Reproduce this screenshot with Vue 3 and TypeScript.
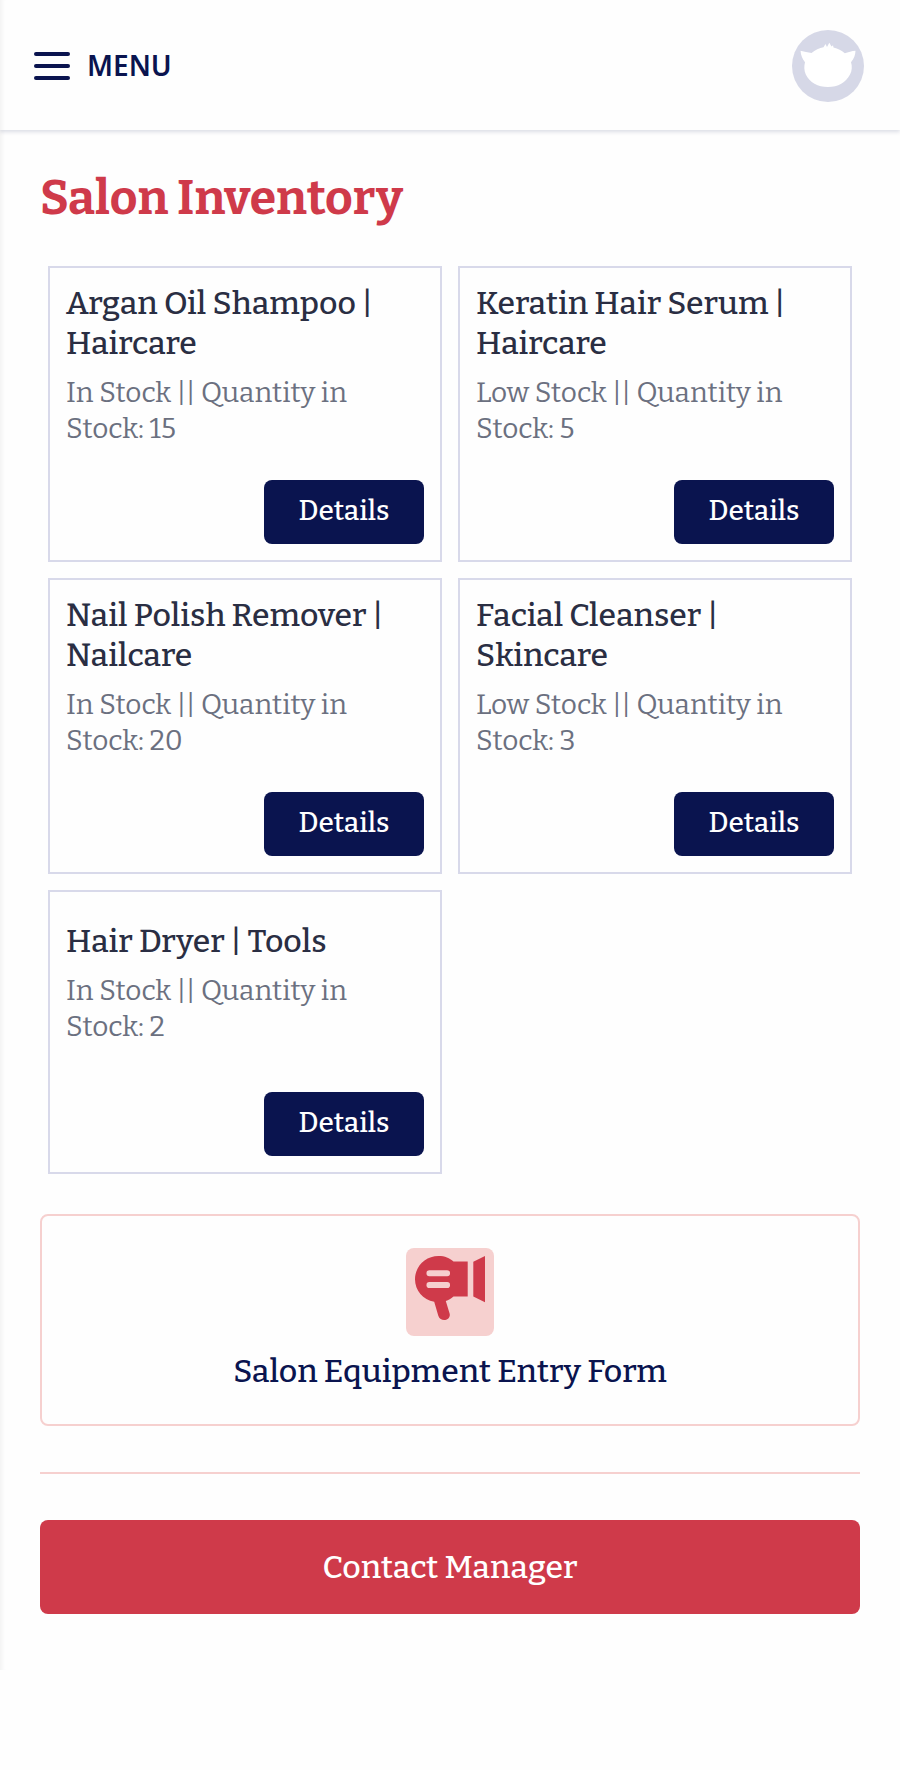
<script setup lang="ts">
interface Item {
  name: string
  category: string
  status: string
  quantity: number
}

const items: Item[] = [
  { name: 'Argan Oil Shampoo', category: 'Haircare', status: 'In Stock', quantity: 15 },
  { name: 'Keratin Hair Serum', category: 'Haircare', status: 'Low Stock', quantity: 5 },
  { name: 'Nail Polish Remover', category: 'Nailcare', status: 'In Stock', quantity: 20 },
  { name: 'Facial Cleanser', category: 'Skincare', status: 'Low Stock', quantity: 3 },
  { name: 'Hair Dryer', category: 'Tools', status: 'In Stock', quantity: 2 },
]
</script>

<template>
  <div class="page">
    <header class="topbar">
      <button class="menu" type="button">
        <span class="bars"><i></i><i></i><i></i></span>
        <span class="menu-label">MENU</span>
      </button>
      <svg class="avatar" viewBox="0 0 72 72" aria-label="Profile">
        <circle cx="36" cy="36" r="36" fill="#d6d8e7" />
        <path
          fill="#fff"
          d="M8.500 20.700C12 21.500 16 22.400 19.500 23C23 20 27.500 18 31.500 17.300L33.500 14L35 17L37.300 12.800L39.500 16.600L41 15.200L41.500 17.500C46 18.500 49.500 20.500 52.800 23.200C56 22.300 60 21 63.500 20.800C63.400 25 62 29 59 32.200C60.300 36 60 41 58 44.500C54 52.500 46 57 36 57C26 57 17.500 52.500 13.800 44.500C12 40.500 12 36 13 32.200C10.500 29 8.800 25 8.500 20.700Z"
        />
      </svg>
    </header>

    <main class="content">
      <h1>Salon Inventory</h1>

      <section class="grid">
        <article v-for="item in items" :key="item.name" class="card">
          <div class="info">
            <h2>{{ item.name }} | {{ item.category }}</h2>
            <p>{{ item.status }} || Quantity in Stock: {{ item.quantity }}</p>
          </div>
          <button class="details" type="button">Details</button>
        </article>
      </section>

      <a class="form-link">
        <svg class="form-icon" viewBox="0 0 88 88" aria-hidden="true">
          <rect width="88" height="88" rx="8" fill="#f6d0cf" />
          <g fill="#cf3a4a">
            <path d="M32.500 8C39 8 43.500 10 47.500 13.500H61.700V48.500H47.500C45 50.500 42.500 52 39.800 53L43.600 65.500C45.500 72.500 34.500 74.800 32.300 67.800L28.200 53.800C17 52 9 42.500 9 31.300C9 18.300 19.500 8 32.500 8Z" />
            <path d="M67.300 13.700L79 8V54.300L67.300 48.500Z" />
          </g>
          <g fill="#f6d0cf">
            <rect x="20.500" y="22.300" width="23.500" height="6" rx="2.800" />
            <rect x="20.500" y="34" width="23.500" height="6" rx="2.800" />
          </g>
        </svg>
        <span>Salon Equipment Entry Form</span>
      </a>

      <hr />

      <button class="contact" type="button">Contact Manager</button>
    </main>
  </div>
</template>

<style>
body {
  background: #fefefe;
}
</style>

<style scoped>
.page {
  height: 1670px;
  box-shadow: inset 5px 0 4px -3px rgba(0, 0, 0, 0.05);
  font-family: Bitter, "DejaVu Serif Condensed", "DejaVu Serif", serif;
  font-weight: 500;
}

button {
  margin: 0;
  padding: 0;
  border: 0;
  font-family: inherit;
  font-weight: 500;
}

.topbar {
  box-sizing: border-box;
  height: 130px;
  padding: 2px 36px 0 34px;
  display: flex;
  align-items: center;
  justify-content: space-between;
  box-shadow: 0 2px 4px rgba(10, 20, 80, 0.14);
}

.menu {
  display: flex;
  align-items: center;
  gap: 17px;
  background: none;
  color: #0a144f;
}

.bars {
  width: 36px;
  display: flex;
  flex-direction: column;
  gap: 8px;
}

.bars i {
  height: 4px;
  border-radius: 2px;
  background: #0a144f;
}

.menu-label {
  padding-bottom: 2px;
  font: 600 28px/36px "Noto Sans", "Open Sans", sans-serif;
}

.avatar {
  width: 72px;
  height: 72px;
}

.content {
  padding: 0 40px;
}

h1 {
  margin: 0;
  padding-top: 36px;
  color: #cf3a4a;
  font-size: 48px;
  font-weight: 700;
  line-height: 64px;
}

.grid {
  margin: 36px 8px 0;
  display: grid;
  grid-template-columns: 1fr 1fr;
  gap: 16px;
}

.card {
  box-sizing: border-box;
  min-height: 284px;
  padding: 16px;
  border: 2px solid #d8d9ea;
  display: flex;
  flex-direction: column;
}

.info {
  flex: 1;
  display: flex;
  flex-direction: column;
  justify-content: center;
  margin-top: -1px;
  padding-bottom: 33px;
}

h2 {
  margin: 0 0 12px;
  color: #2a2e43;
  font-size: 32px;
  font-weight: 500;
  line-height: 40px;
}

.info p {
  margin: 0;
  color: #6b7080;
  font-size: 28px;
  font-weight: 400;
  line-height: 36px;
}

.details {
  align-self: flex-end;
  width: 160px;
  height: 64px;
  padding-bottom: 3px;
  border-radius: 8px;
  background: #0a144f;
  color: #fff;
  font-size: 28px;
}

.form-link {
  box-sizing: border-box;
  height: 212px;
  margin-top: 40px;
  padding-top: 32px;
  border: 2px solid #f6d0cf;
  border-radius: 8px;
  display: flex;
  flex-direction: column;
  align-items: center;
  gap: 15px;
  color: #0a144f;
  font-size: 32px;
  line-height: 40px;
}

.form-icon {
  width: 88px;
  height: 88px;
}

hr {
  height: 2px;
  margin: 46px 0;
  border: 0;
  background: #f6d0cf;
}

.contact {
  width: 100%;
  height: 94px;
  border-radius: 8px;
  background: #cf3a4a;
  color: #fff;
  font-size: 32px;
}
</style>
